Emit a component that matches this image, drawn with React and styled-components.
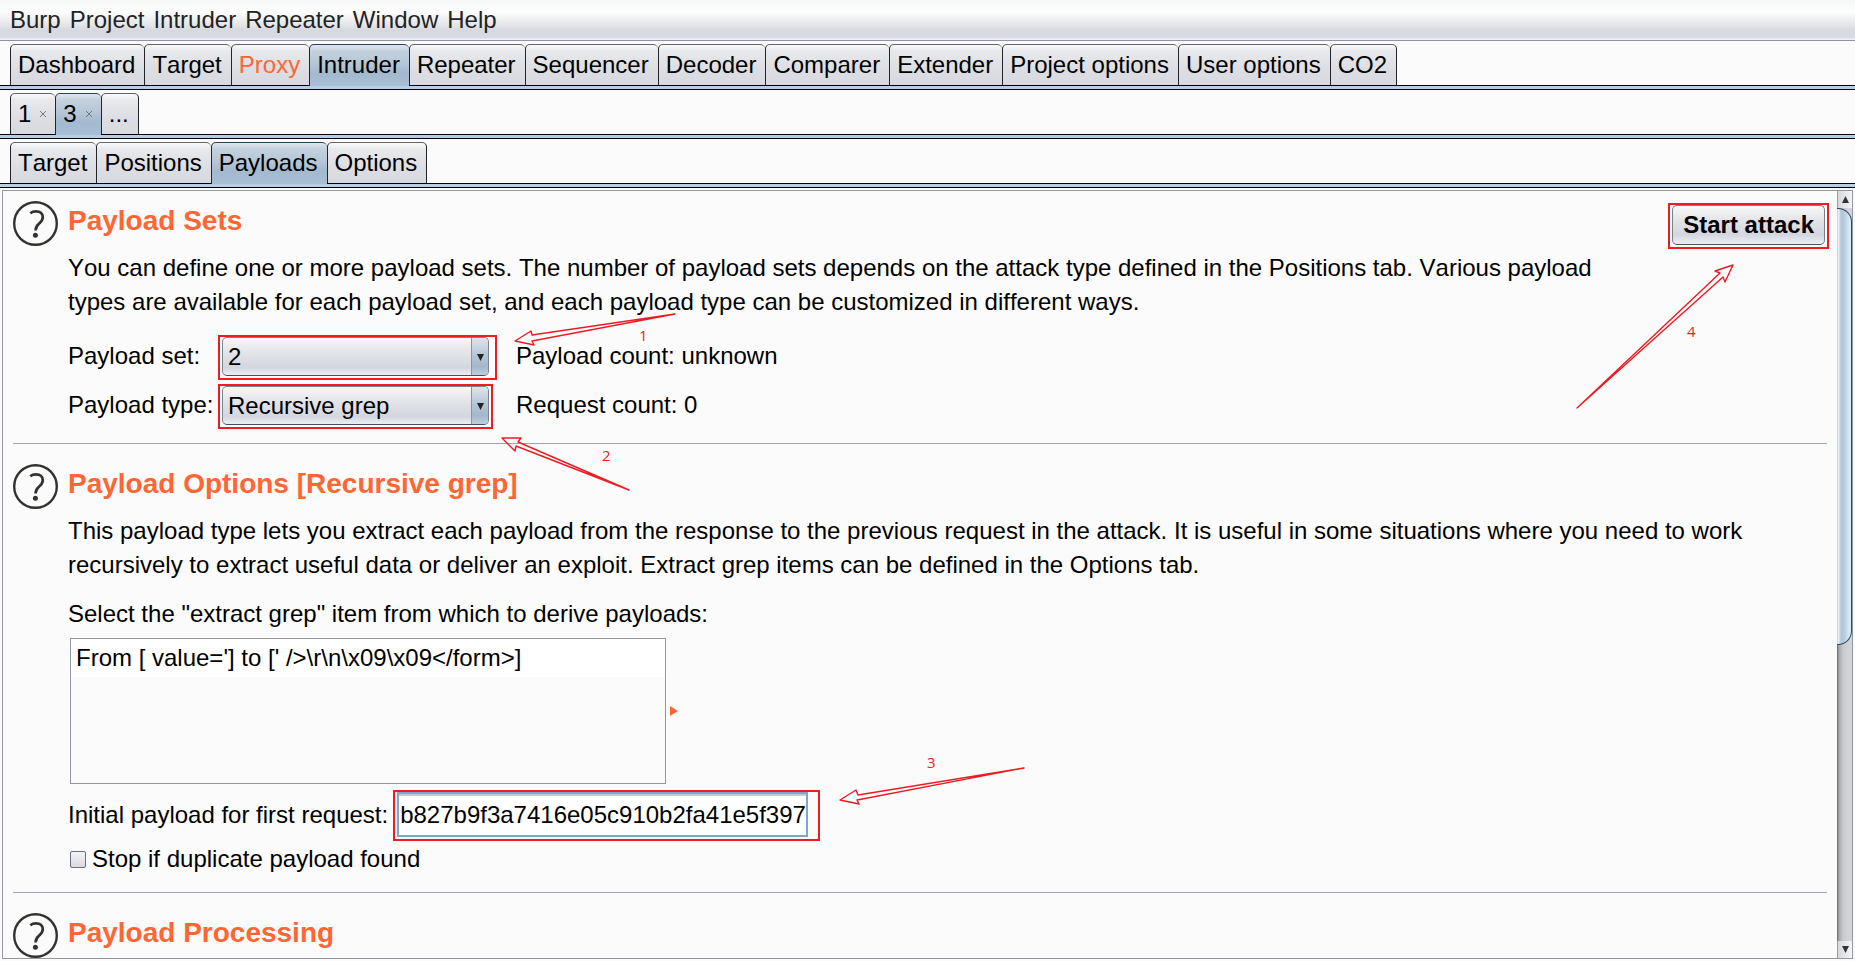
import React, {useState} from "react"
import styled, {createGlobalStyle} from "styled-components"


const GlobalStyle = createGlobalStyle`
  * {
    box-sizing: border-box;
  }

  html, body, #root {
    height: 100%;
    margin: 0;
  }

  body {
    overflow: hidden;
    background-color: #fbfbfb;
    color: #000;
    font-family: "Liberation Sans", Arial, sans-serif;
    font-size: 24px;
    line-height: 34px;
    font-kerning: none;
  }

  button, input, select {
    margin: 0;
    font: inherit;
    color: inherit;
  }
`

const Window = styled.div`
  display: flex;
  flex-direction: column;
  height: 100vh;
`

const MenuBar = styled.nav`
  display: flex;
  align-items: center;
  gap: 9px;
  flex: none;
  height: 41px;
  padding-left: 10px;
  border-bottom: 1px solid #9193a2;
  background: linear-gradient(#f6f8f8 0px, #fdfdfd 12px, #e6e7ea 24px, #d6d9df 30px, #d8dae4 38px, #f0f1f5 39px);
`

const MenuItem = styled.button`
  padding: 0;
  border: 0;
  background: none;
  color: #232323;
`

const TabBar = styled.div`
  display: flex;
  flex: none;
  padding: 3px 10px 0;
`

const TabButton = styled.button`
  display: flex;
  align-items: center;
  gap: 9px;
  position: relative;
  height: ${({$active}) => ($active ? "42px" : "41px")};
  margin-bottom: ${({$active}) => ($active ? "-1px" : "0")};
  padding: ${({$active}) => ($active ? "0 9px 1px 7px" : "0 9px 0 7px")};
  border: 0 solid #23232b;
  border-top: 1px solid ${({$active}) => ($active ? "#2c4257" : "#63656e")};
  border-left-width: 1px;
  border-radius: 5px 5px 0 0;
  background: ${({$active}) => ($active
    ? "linear-gradient(#dfe7ee 0px, #c3d1de 6px, #b3c5d5 20px, #a3b9cd 28px, #a9bfd6 41px)"
    : "linear-gradient(#fafafb 0px, #e8e9ec 6px, #dddee3 24px, #d8d9e0 41px)")};
  color: ${({$hot}) => ($hot ? "#ff6633" : "#000")};
  white-space: nowrap;

  &:last-child {
    border-right-width: 1px;
  }
`

const CloseMark = styled.svg`
  width: 6px;
  height: 6px;
  stroke: #75777c;
`

const Strip = styled.div`
  flex: none;
  height: 5px;
  border-top: 1px solid #000010;
  border-bottom: 1px solid #000010;
  background-color: #b7cfe3;
`

const Panel = styled.main`
  display: flex;
  flex: 1;
  min-height: 0;
  margin: 2px;
  border: 1px solid #9297a1;
`

const Content = styled.div`
  flex: 1;
  min-width: 0;
  overflow: hidden;
  padding: 0 10px;
`

const Section = styled.section`
  display: flex;
  gap: 10px;
  padding: 20px 0 16px;
  border-bottom: 1px solid #a1a4b0;

  &:first-child {
    padding-top: 10px;
  }

  &:last-child {
    border-bottom: 0;
  }
`

const HelpButton = styled.button`
  flex: none;
  width: 45px;
  height: 45px;
  padding: 0;
  border: 0;
  background: none;

  svg {
    display: block;
  }
`

const SectionBody = styled.div`
  flex: 1;
  min-width: 0;
  padding-top: 3px;
`

const Title = styled.h2`
  margin: 0 0 13px;
  font-size: 28px;
  line-height: 34px;
  font-weight: bold;
  color: #ff6633;
`

const Description = styled.p`
  margin: 0 0 15px;
  white-space: nowrap;
`

const SettingsGrid = styled.div`
  display: grid;
  grid-template-columns: 154px 294px auto;
  justify-content: start;
  row-gap: 10px;
  padding: 3px 0 2px;
  line-height: 38px;
`

const Marked = styled.div`
  position: relative;
  width: fit-content;
  height: fit-content;
`

// red frame drawn over the control it surrounds
const Frame = styled.span`
  position: absolute;
  top: -2px;
  bottom: -4px;
  left: -4px;
  right: ${({$right}) => $right || -4}px;
  border: 2px solid #ed1c24;
  pointer-events: none;
`

const SelectBox = styled.div`
  display: grid;
  width: 267px;
  height: 39px;
  border: 1px solid #7b838d;
  border-bottom-color: #46505c;
  border-radius: 5px;
  background: linear-gradient(#f6f7f8, #e3e4e8 40%, #d4d6df 80%, #eceef3);
  overflow: hidden;

  > * {
    grid-area: 1 / 1;
  }

  select {
    appearance: none;
    width: 100%;
    padding: 0 20px 0 5px;
    border: 0;
    outline: 0;
    background: none;
    z-index: 1;
  }
`

const SelectArrow = styled.span`
  display: flex;
  align-items: center;
  justify-content: center;
  justify-self: end;
  width: 17px;
  border-left: 1px solid #8098ad;
  background: linear-gradient(#dde5ec, #b5c6d6 45%, #a3b8cb 75%, #bfd2e2);
`

const StartButton = styled.button`
  display: block;
  height: 40px;
  padding: 0 10px;
  border: 1px solid #7b7f86;
  border-bottom-color: #50555c;
  border-radius: 5px;
  background: linear-gradient(#f8f8f9, #e2e3e7 40%, #d4d6df 75%, #eceef3);
  font-weight: bold;
  white-space: nowrap;
`

const StartSlot = styled.div`
  flex: none;
  margin: 4px 2px 0 0;
`

const ListRow = styled.div`
  display: flex;
  align-items: center;
  gap: 4px;
  margin-top: 7px;
`

const ItemList = styled.ul`
  width: 596px;
  height: 146px;
  margin: 0 0 0 2px;
  padding: 0;
  border: 1px solid #9297a1;
  list-style: none;

  li {
    height: 38px;
    padding-left: 5px;
    background-color: #fff;
    line-height: 38px;
  }
`

const InputRow = styled.div`
  display: flex;
  align-items: center;
  gap: 9px;
  margin-top: 8px;
`

const PayloadInput = styled.input`
  display: block;
  width: 411px;
  height: 45px;
  padding: 0 0 0 1px;
  border: 2px solid #84a5cb;
  outline: 0;
  background-color: #fff;
  box-shadow: inset 0 2px 0 #c9c9c9;
`

const CheckRow = styled.label`
  display: flex;
  align-items: center;
  gap: 6px;
  width: fit-content;
  margin: 5px 0 0 2px;

  input {
    appearance: none;
    width: 16px;
    height: 17px;
    border: 1px solid #6c707a;
    border-radius: 2px;
    background: linear-gradient(#f4f5f7, #d8dae1);
  }
`

const ScrollBar = styled.div`
  display: flex;
  flex-direction: column;
  flex: none;
  width: 15px;
  background: linear-gradient(90deg, #66686c 0px, #a6a8ad 2px, #c9cace 6px, #d2d3d9 11px, #d4d5dc);
`

const ScrollButton = styled.button`
  display: flex;
  align-items: center;
  justify-content: center;
  flex: none;
  height: 17px;
  padding: 0;
  border: 0;
  border-left: 1px solid #9a9ca2;
  background: linear-gradient(90deg, #d6d8dc, #f4f5f6);
`

const Thumb = styled.div`
  height: 57%;
  border: 1px solid #2d4a63;
  border-left: 0;
  border-radius: 0 14px 14px 0;
  background: linear-gradient(90deg, #9fb3c6 0px, #f4f8fa 1px, #b2c6d8 4px, #b4cbde 7px, #d6eaf5 12px);
`

const ScrollSpace = styled.div`
  flex: 1;
`

const Notes = styled.svg`
  position: absolute;
  top: 0;
  left: 0;
  pointer-events: none;
  fill: none;
  stroke: #ed1c24;
  stroke-width: 1.4;
  stroke-linejoin: round;

  text {
    font-family: "Open Sans", sans-serif;
    font-size: 15px;
    fill: #ed1c24;
    stroke: none;
  }
`


const mainTabs = ["Dashboard", "Target", "Proxy", "Intruder", "Repeater", "Sequencer", "Decoder", "Comparer", "Extender", "Project options", "User options", "CO2"]
const attackTabs = ["1", "3", "..."]
const intruderTabs = ["Target", "Positions", "Payloads", "Options"]

const Tabs = ({items, selected, hot, closable}) => {
  const [active, setActive] = useState(selected)

  return (
    <>
      <TabBar role="tablist">
        {items.map((item) => (
          <TabButton
              key={item}
              type="button"
              role="tab"
              aria-selected={item === active}
              $active={item === active}
              $hot={item === hot}
              onClick={() => setActive(item)}>
            {item}
            {closable && item !== "..." &&
              <CloseMark viewBox="0 0 6 6"><path d="M0 0l6 6M6 0l-6 6"/></CloseMark>}
          </TabButton>
        ))}
      </TabBar>
      <Strip/>
    </>
  )
}

const Help = () => (
  <HelpButton type="button" aria-label="Help">
    <svg width="45" height="45" viewBox="0 0 45 45" fill="none" stroke="#32322f">
      <circle cx="22.5" cy="22.5" r="21.3" strokeWidth="2.4"/>
      <path d="M17.3 12.2C19 10.8 21 10.4 23 10.4c4 0 6.8 2.1 6.8 5.8 0 2.8-1.5 4.4-3.6 6.2-2.3 2-3.7 3.6-3.7 7.2" strokeWidth="2.7"/>
      <circle cx="22.4" cy="34.3" r="2.5" fill="#32322f" stroke="none"/>
    </svg>
  </HelpButton>
)

const Select = ({id, value, options, onChange}) => (
  <SelectBox>
    <select id={id} value={value} onChange={(e) => onChange(e.target.value)}>
      {options.map((option) => <option key={option}>{option}</option>)}
    </select>
    <SelectArrow>
      <svg width="7" height="7" viewBox="0 0 7 7"><path d="M0 0h7L3.5 7z" fill="#222"/></svg>
    </SelectArrow>
  </SelectBox>
)

const App = () => {
  const [payloadSet, setPayloadSet] = useState("2")
  const [payloadType, setPayloadType] = useState("Recursive grep")
  const [initial, setInitial] = useState("b827b9f3a7416e05c910b2fa41e5f397")
  const [stop, setStop] = useState(false)

  return (
    <Window>
      <GlobalStyle/>
      <MenuBar>
        {["Burp", "Project", "Intruder", "Repeater", "Window", "Help"].map((item) => (
          <MenuItem key={item} type="button">{item}</MenuItem>
        ))}
      </MenuBar>
      <Tabs items={mainTabs} selected="Intruder" hot="Proxy"/>
      <Tabs items={attackTabs} selected="3" closable/>
      <Tabs items={intruderTabs} selected="Payloads"/>

      <Panel>
        <Content>
          <Section>
            <Help/>
            <SectionBody>
              <Title>Payload Sets</Title>
              <Description>
                You can define one or more payload sets. The number of payload sets depends on the attack type defined in the Positions tab. Various payload<br/>
                types are available for each payload set, and each payload type can be customized in different ways.
              </Description>
              <SettingsGrid>
                <label htmlFor="payload-set">Payload set:</label>
                <Marked>
                  <Select id="payload-set" value={payloadSet} options={["1", "2"]} onChange={setPayloadSet}/>
                  <Frame $right={-8}/>
                </Marked>
                <span>Payload count: unknown</span>
                <label htmlFor="payload-type">Payload type:</label>
                <Marked>
                  <Select
                      id="payload-type"
                      value={payloadType}
                      options={["Simple list", "Recursive grep"]}
                      onChange={setPayloadType}/>
                  <Frame/>
                </Marked>
                <span>Request count: 0</span>
              </SettingsGrid>
            </SectionBody>
            <StartSlot>
              <Marked>
                <StartButton type="button">Start attack</StartButton>
                <Frame/>
              </Marked>
            </StartSlot>
          </Section>

          <Section>
            <Help/>
            <SectionBody>
              <Title>Payload Options [Recursive grep]</Title>
              <Description>
                This payload type lets you extract each payload from the response to the previous request in the attack. It is useful in some situations where you need to work<br/>
                recursively to extract useful data or deliver an exploit. Extract grep items can be defined in the Options tab.
              </Description>
              <div>Select the "extract grep" item from which to derive payloads:</div>
              <ListRow>
                <ItemList>
                  <li>{"From [ value='] to [' />\\r\\n\\x09\\x09</form>]"}</li>
                </ItemList>
                <svg width="8" height="10" viewBox="0 0 8 10"><path d="M0 0l8 5-8 5z" fill="#ff6633"/></svg>
              </ListRow>
              <InputRow>
                <label htmlFor="initial">Initial payload for first request:</label>
                <Marked>
                  <PayloadInput
                      id="initial"
                      type="text"
                      value={initial}
                      onChange={(e) => setInitial(e.target.value)}/>
                  <Frame $right={-12}/>
                </Marked>
              </InputRow>
              <CheckRow>
                <input type="checkbox" checked={stop} onChange={(e) => setStop(e.target.checked)}/>
                Stop if duplicate payload found
              </CheckRow>
            </SectionBody>
          </Section>

          <Section>
            <Help/>
            <SectionBody>
              <Title>Payload Processing</Title>
            </SectionBody>
          </Section>
        </Content>
        <ScrollBar>
          <ScrollButton type="button" aria-label="Scroll up">
            <svg width="7" height="7" viewBox="0 0 7 7"><path d="M0 7h7L3.5 0z" fill="#333"/></svg>
          </ScrollButton>
          <Thumb/>
          <ScrollSpace/>
          <ScrollButton type="button" aria-label="Scroll down">
            <svg width="7" height="7" viewBox="0 0 7 7"><path d="M0 0h7L3.5 7z" fill="#333"/></svg>
          </ScrollButton>
        </ScrollBar>
      </Panel>

      <Notes width="1855" height="961" viewBox="0 0 1855 961">
        <path d="M675 314L532 335 531 331 515 341 534 345 532 341z"/>
        <text x="639" y="341">1</text>
        <path d="M629 490L518 442 521 438 502 438 515 451 516 446z"/>
        <text x="602" y="461">2</text>
        <path d="M1024 768L858 795 856 790 840 800 859 804 857 800z"/>
        <text x="927" y="768">3</text>
        <path d="M1577 408L1720 273 1715 271 1733 265 1725 282 1723 277z"/>
        <text x="1687" y="337">4</text>
      </Notes>
    </Window>
  )
}

export default App
